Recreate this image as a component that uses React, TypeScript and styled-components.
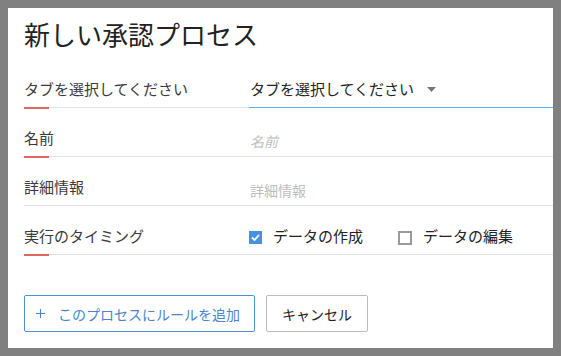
import styled, { createGlobalStyle } from 'styled-components'

const GlobalStyle = createGlobalStyle`
  html, body {
    margin: 0;
    padding: 0;
  }
  body {
    background: #808080;
    padding: 8px;
    font-family: "Noto Sans CJK JP", "Noto Sans", sans-serif;
  }
`;

const Panel = styled.div`
  background: #fff;
  height: 340px;
  box-sizing: border-box;
  padding: 10px 0 0 16px;
`;

const Title = styled.h1`
  margin: 0 0 9px;
  font-size: 26px;
  line-height: 32px;
  font-weight: 400;
  color: #222;
`;

const Row = styled.div`
  display: grid;
  grid-template-columns: 225px 1fr;
  height: 49px;
`;

const Label = styled.div<{ $required?: boolean }>`
  position: relative;
  box-sizing: border-box;
  padding-top: 20px;
  font-size: 15px;
  line-height: 20px;
  color: #3a3a3a;
  border-bottom: 1px solid #e2e2e2;

  &::after {
    content: '';
    display: ${(p) => (p.$required ? 'block' : 'none')};
    position: absolute;
    left: 0;
    bottom: -2px;
    width: 25px;
    height: 2px;
    background: #dc6a63;
  }
`;

const Field = styled.div<{ $active?: boolean; $top?: number }>`
  box-sizing: border-box;
  padding-top: ${(p) => p.$top ?? 20}px;
  border-bottom: 1px solid ${(p) => (p.$active ? '#5fb0e8' : '#e2e2e2')};
`;

const Select = styled.div`
  display: flex;
  align-items: center;
  gap: 13px;
  padding-left: 1px;
  font-size: 15px;
  line-height: 20px;
  color: #222;
`;

const TextInput = styled.input<{ $italic?: boolean }>`
  display: block;
  width: 100%;
  height: 20px;
  border: none;
  outline: none;
  padding: 0 0 0 1px;
  margin: 0;
  background: transparent;
  font-family: inherit;
  font-size: 14px;
  line-height: 20px;
  color: #222;

  &::placeholder {
    color: #bdbdbd;
    font-style: ${(p) => (p.$italic ? 'italic' : 'normal')};
  }
`;

const Checks = styled.div`
  display: flex;
  align-items: center;
  gap: 35px;
`;

const CheckItem = styled.label`
  display: flex;
  align-items: center;
  gap: 11px;
  font-size: 15px;
  line-height: 20px;
  color: #222;
`;

const Box = styled.span<{ $checked?: boolean }>`
  display: flex;
  align-items: center;
  justify-content: center;
  box-sizing: border-box;
  width: ${(p) => (p.$checked ? 13 : 14)}px;
  height: ${(p) => (p.$checked ? 13 : 14)}px;
  margin-top: 3px;
  background: ${(p) => (p.$checked ? '#4a90e2' : '#fff')};
  border: ${(p) => (p.$checked ? 'none' : '2px solid #999')};
`;

const Actions = styled.div`
  display: flex;
  gap: 11px;
  margin-top: 40px;
`;

const Button = styled.button<{ $primary?: boolean }>`
  display: flex;
  align-items: center;
  gap: 13px;
  height: 37px;
  box-sizing: border-box;
  padding: ${(p) => (p.$primary ? '0 14px 0 11px' : '0 15px')};
  background: #fff;
  border: 1px solid ${(p) => (p.$primary ? '#4a8fdc' : '#bcbcbc')};
  border-radius: 2px;
  font-family: inherit;
  font-size: 14px;
  color: ${(p) => (p.$primary ? '#4a84cf' : '#222')};
  cursor: pointer;
`;

function App() {
  return (
    <>
      <GlobalStyle />
      <Panel>
        <Title>新しい承認プロセス</Title>
        <Row>
          <Label $required>タブを選択してください</Label>
          <Field $active>
            <Select>
              タブを選択してください
              <svg width="9" height="5" viewBox="0 0 9 5">
                <polygon points="0,0 9,0 4.5,5" fill="#777" />
              </svg>
            </Select>
          </Field>
        </Row>
        <Row>
          <Label $required>名前</Label>
          <Field $top={23}>
            <TextInput $italic placeholder="名前" />
          </Field>
        </Row>
        <Row>
          <Label>詳細情報</Label>
          <Field $top={23}>
            <TextInput placeholder="詳細情報" />
          </Field>
        </Row>
        <Row>
          <Label $required>実行のタイミング</Label>
          <Field $top={20}>
            <Checks>
              <CheckItem>
                <Box $checked>
                  <svg width="9" height="7" viewBox="0 0 9 7">
                    <polyline points="1,3.5 3.5,6 8,1" fill="none" stroke="#fff" strokeWidth="1.8" />
                  </svg>
                </Box>
                データの作成
              </CheckItem>
              <CheckItem>
                <Box />
                データの編集
              </CheckItem>
            </Checks>
          </Field>
        </Row>
        <Actions>
          <Button $primary>
            <svg width="9" height="9" viewBox="0 0 9 9">
              <path d="M4.5 0V9M0 4.5H9" stroke="#4a84cf" strokeWidth="1.1" />
            </svg>
            このプロセスにルールを追加
          </Button>
          <Button>キャンセル</Button>
        </Actions>
      </Panel>
    </>
  )
}

export default App
